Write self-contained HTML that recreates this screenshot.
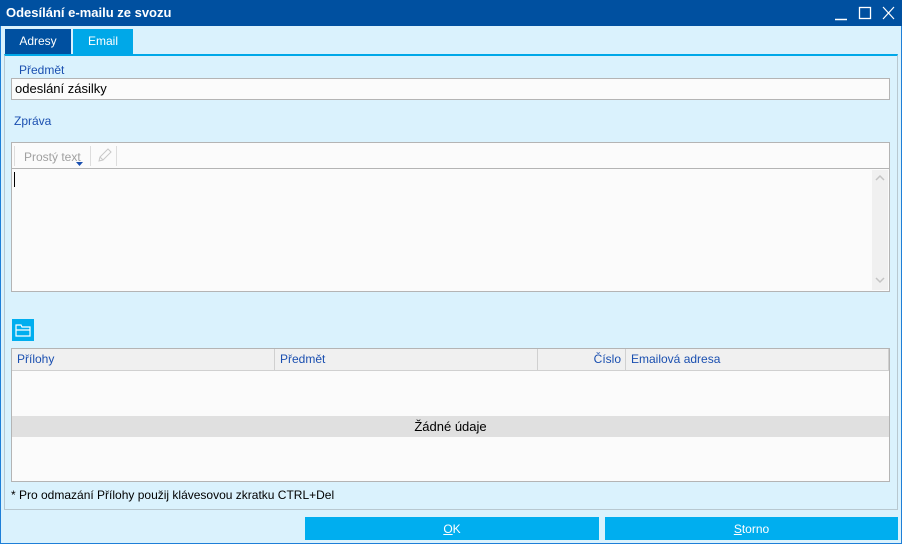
<!DOCTYPE html>
<html><head><meta charset="utf-8"><style>
*{box-sizing:border-box;margin:0;padding:0}
body{width:902px;height:544px;overflow:hidden;font-family:"Liberation Sans","DejaVu Sans",sans-serif;font-size:12px;background:#daf2fd;position:relative}
.a{position:absolute}
.win{left:0;top:0;width:902px;height:544px;border:1px solid #1e7fd8}
.title{left:0;top:0;width:902px;height:26px;background:#0050a0;color:#fff;font-weight:bold;font-size:13px;line-height:26px;padding-left:6px}
.tab{top:29px;height:25px;color:#fff;font-size:12px;line-height:25px;text-align:center}
.panel{left:4px;top:54px;width:894px;height:456px;border:1px solid #b8c8d0;border-top:2px solid #00a8e8}
.lbl{color:#1a4fb0;font-size:12px}
.box{background:#fbfbfb;border:1px solid #b4b4b4}
.th{top:0;height:22px;line-height:21px;color:#1a4fb0;border-right:1px solid #d0d0d0;padding:0 5px}
.btn{top:517px;height:23px;background:#00aeef;color:#fff;text-align:center;line-height:24px;font-size:12px}
</style></head><body>
<div class="a win"></div>
<div class="a title">Odesílání e-mailu ze svozu</div>
<svg class="a" style="left:0;top:0" width="902" height="26"><path d="M835 19.5h12" stroke="#fff" stroke-width="1.5"/><rect x="859.5" y="7.5" width="11" height="11" fill="none" stroke="#fff" stroke-width="1.3"/><path d="M883 7l11 12M894 7l-11 12" stroke="#fff" stroke-width="1.2"/></svg>
<div class="a tab" style="left:5px;width:66px;background:#0050a0">Adresy</div>
<div class="a tab" style="left:73px;width:60px;background:#00a8e8">Email</div>
<div class="a panel"></div>
<div class="a lbl" style="left:19px;top:63px">Předmět</div>
<div class="a box" style="left:11px;top:78px;width:879px;height:22px;font-size:13px;line-height:20px;padding-left:3px;color:#000">odeslání zásilky</div>
<div class="a lbl" style="left:14px;top:114px">Zpráva</div>
<div class="a box" style="left:11px;top:142px;width:879px;height:150px"></div>
<div class="a" style="left:12px;top:168px;width:877px;height:1px;background:#b4b4b4"></div>
<div class="a" style="left:14px;top:146px;width:1px;height:20px;background:#ddd"></div>
<div class="a" style="left:24px;top:150px;color:#a0a0a0;font-size:12px">Prostý text</div>
<svg class="a" style="left:76px;top:162px" width="7" height="4"><path d="M0 0h7L3.5 4z" fill="#1a4fb0"/></svg>
<div class="a" style="left:90px;top:146px;width:1px;height:20px;background:#ddd"></div>
<div class="a" style="left:116px;top:146px;width:1px;height:20px;background:#ddd"></div>
<svg class="a" style="left:96px;top:147px" width="16" height="17"><path d="M3 14l1-4 8-8 3 3-8 8z M4 10l3 3" fill="none" stroke="#c8c8c8" stroke-width="1"/></svg>
<div class="a" style="left:14px;top:172px;width:1px;height:15px;background:#000"></div>
<div class="a" style="left:872px;top:170px;width:16px;height:120px;background:#f0f0f0"></div>
<svg class="a" style="left:875px;top:174px" width="10" height="112"><path d="M1 6l4-4 4 4M1 104l4 4 4-4" fill="none" stroke="#c4c4c4" stroke-width="1.5"/></svg>
<div class="a" style="left:12px;top:319px;width:22px;height:22px;background:#00aeef"></div>
<svg class="a" style="left:12px;top:319px" width="22" height="22"><path d="M4 6h5l1 2h8v9H4z M4 11h14" fill="none" stroke="#fff" stroke-width="1.2"/></svg>
<div class="a box" style="left:11px;top:348px;width:879px;height:134px;overflow:hidden">
<div class="a" style="left:0;top:0;width:877px;height:22px;background:#f0f0f0;border-bottom:1px solid #d0d0d0"></div>
<div class="a th" style="left:0;width:263px">Přílohy</div>
<div class="a th" style="left:263px;width:263px">Předmět</div>
<div class="a th" style="left:526px;width:88px;text-align:right;padding-right:4px">Číslo</div>
<div class="a th" style="left:614px;width:263px">Emailová adresa</div>
<div class="a" style="left:0;top:67px;width:877px;height:21px;background:#e0e0e0;text-align:center;line-height:21px;font-size:13px;color:#000">Žádné údaje</div>
</div>
<div class="a" style="left:11px;top:488px;font-size:12px;color:#000">* Pro odmazání Přílohy použij klávesovou zkratku CTRL+Del</div>
<div class="a btn" style="left:305px;width:294px"><u>O</u>K</div>
<div class="a btn" style="left:605px;width:293px"><u>S</u>torno</div>
</body></html>
